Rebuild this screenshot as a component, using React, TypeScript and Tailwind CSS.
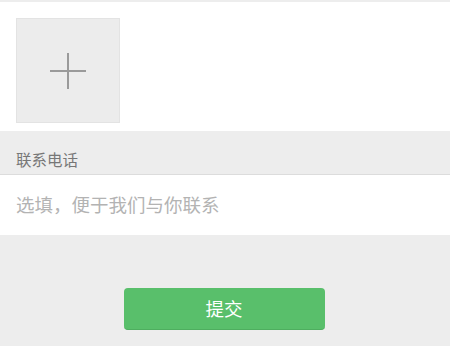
export default function App() {
  return (
    <div
      className="min-h-[346px] w-[450px] bg-[#ededed] pt-[2px]"
      style={{ fontFamily: '"Noto Sans CJK SC", "Noto Sans", sans-serif' }}
    >
      {/* 上传图片 */}
      <div className="h-[129px] bg-white pl-4 pt-4">
        <div className="flex h-[105px] w-[104px] items-center justify-center border border-[#e3e3e3] bg-[#ececec]">
          <svg width="38" height="38" viewBox="0 0 38 38">
            <path d="M1 19h36M19 1v36" stroke="#9a9a9a" strokeWidth="2" />
          </svg>
        </div>
      </div>

      {/* 联系电话 */}
      <div className="flex h-[44px] items-end border-b border-[#dcdcdc] px-4 pb-[7px]">
        <span className="text-[15.5px] leading-none text-[#777]">联系电话</span>
      </div>
      <div className="flex h-[60px] items-center bg-white px-4">
        <input
          className="w-full bg-transparent text-[18.5px] text-[#333] outline-none placeholder:text-[#b3b3b3]"
          placeholder="选填，便于我们与你联系"
        />
      </div>

      {/* 提交 */}
      <div className="flex justify-center pt-[53px]">
        <button className="-ml-[2px] h-[42px] w-[201px] rounded-[4px] border-b border-[#4eae5f] bg-[#59bf6b] text-[18.5px] text-white">
          提交
        </button>
      </div>
    </div>
  );
}
